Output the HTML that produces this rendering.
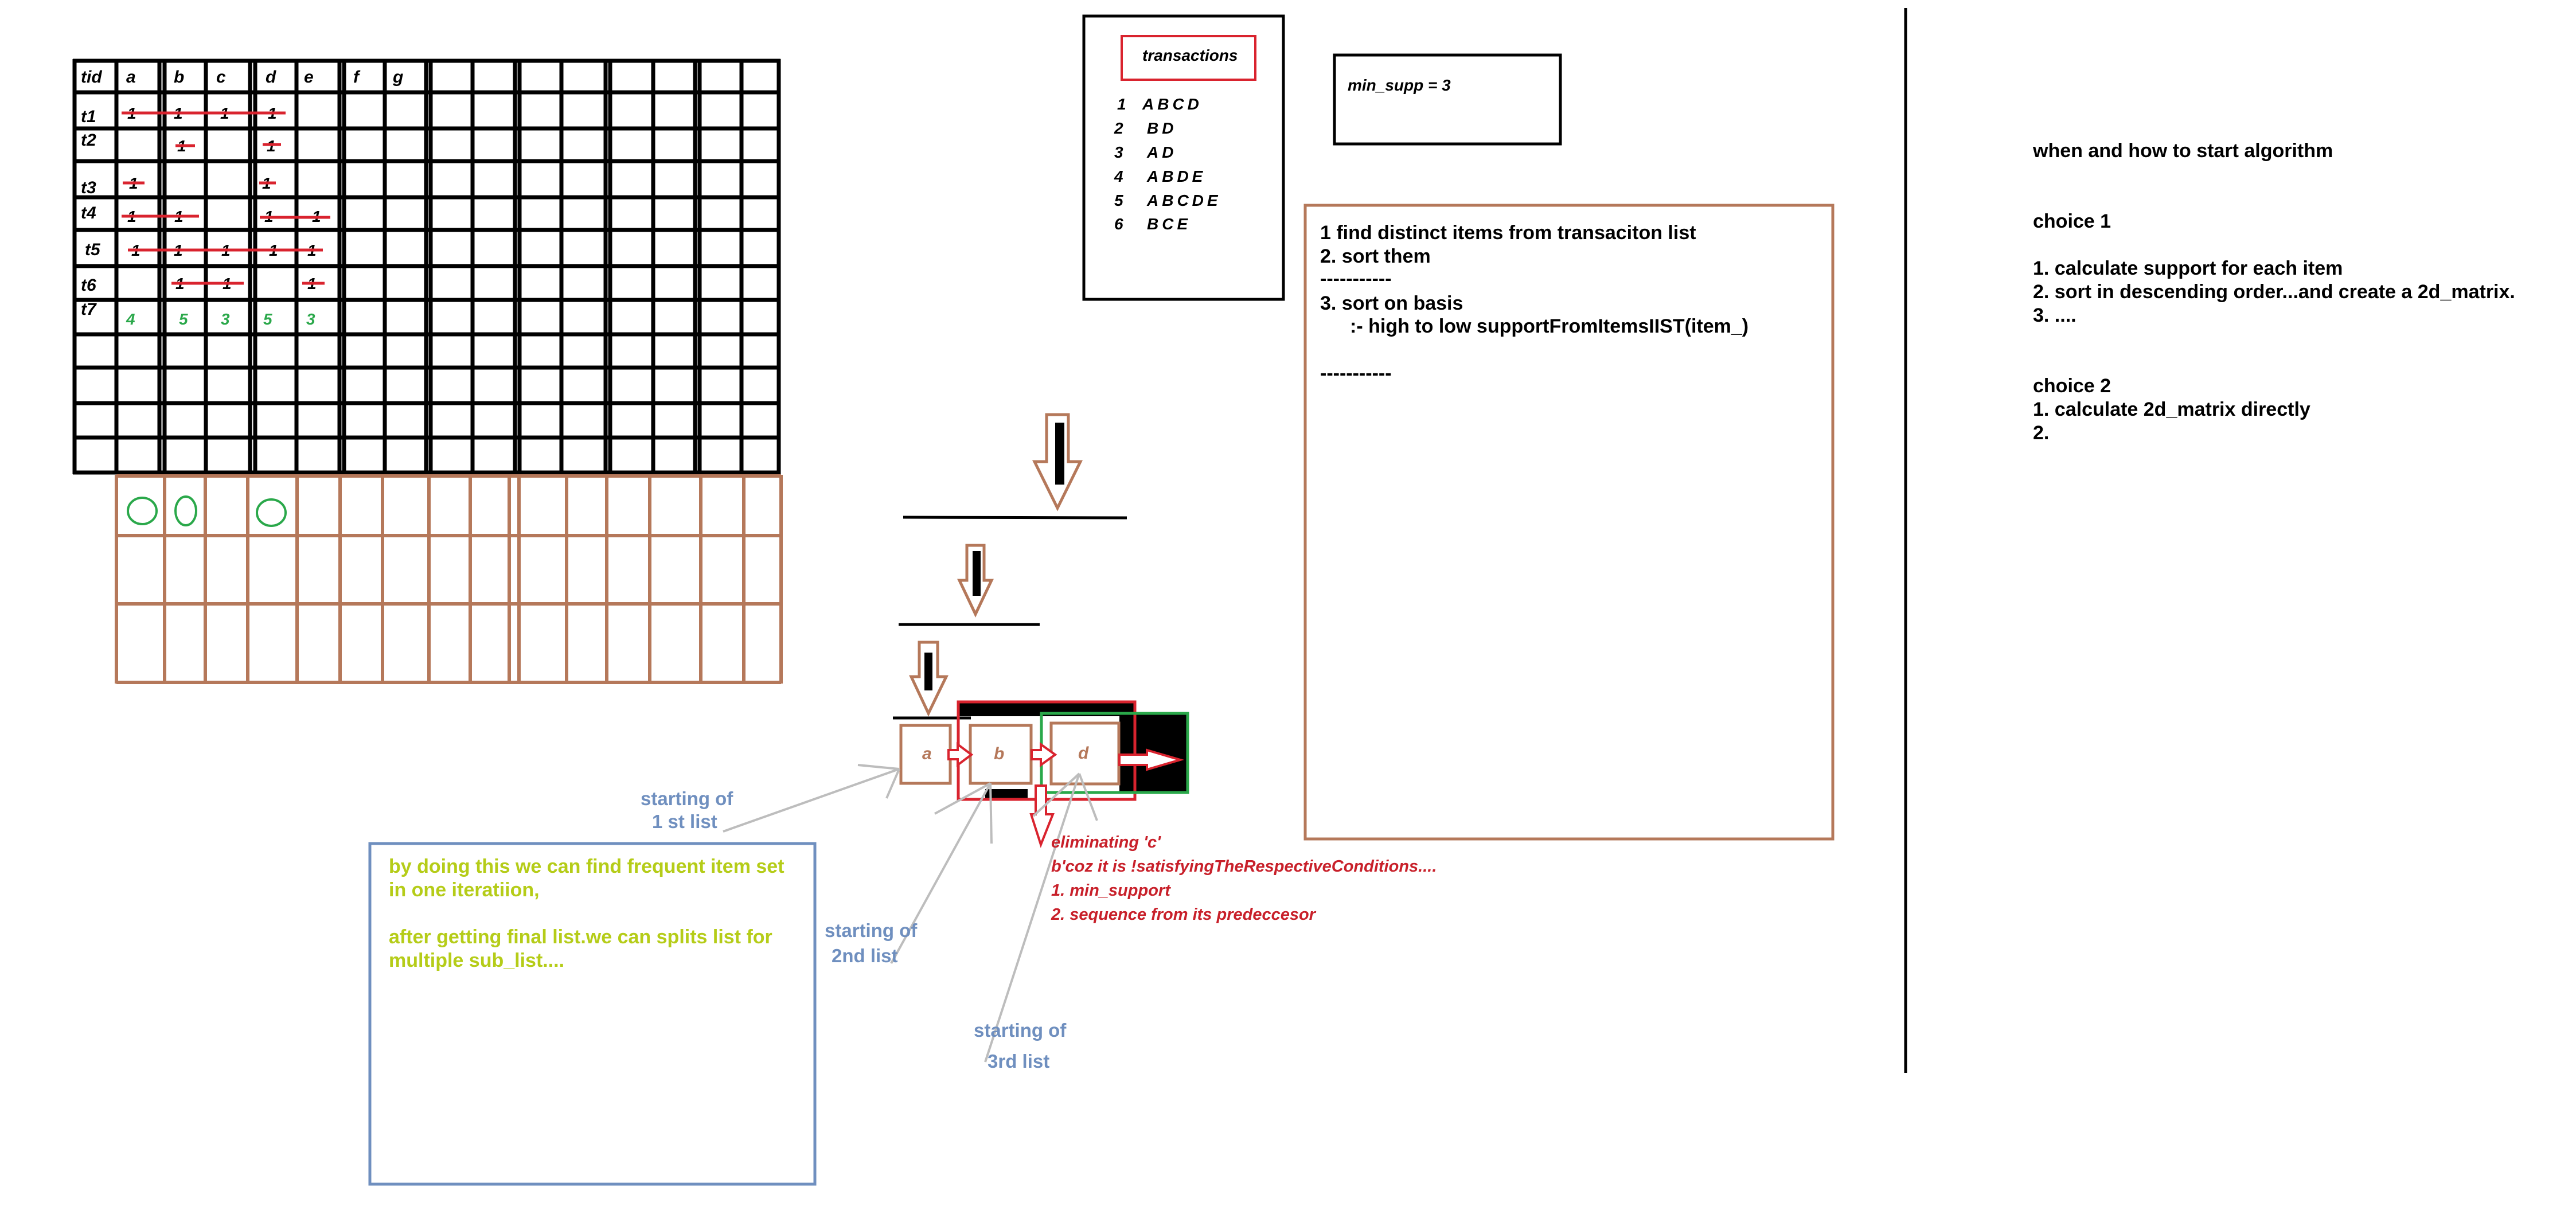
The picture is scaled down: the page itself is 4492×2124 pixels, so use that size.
<!DOCTYPE html>
<html><head><meta charset="utf-8"><style>
html,body{margin:0;padding:0;background:#fff;}
svg{display:block;}
text{font-family:"Liberation Sans",sans-serif;font-weight:bold;}
</style></head><body>
<svg width="4492" height="2124" viewBox="0 0 4492 2124" xmlns="http://www.w3.org/2000/svg">
<rect width="4492" height="2124" fill="#fff"/>
<g stroke="#000" stroke-width="7">
<line x1="130" y1="103" x2="130" y2="827"/>
<line x1="203" y1="103" x2="203" y2="827"/>
<line x1="278" y1="103" x2="278" y2="827"/><line x1="287" y1="103" x2="287" y2="827"/>
<line x1="359" y1="103" x2="359" y2="827"/>
<line x1="436" y1="103" x2="436" y2="827"/><line x1="445" y1="103" x2="445" y2="827"/>
<line x1="517" y1="103" x2="517" y2="827"/>
<line x1="592" y1="103" x2="592" y2="827"/><line x1="600" y1="103" x2="600" y2="827"/>
<line x1="671" y1="103" x2="671" y2="827"/>
<line x1="743" y1="103" x2="743" y2="827"/><line x1="751" y1="103" x2="751" y2="827"/>
<line x1="824" y1="103" x2="824" y2="827"/>
<line x1="898" y1="103" x2="898" y2="827"/><line x1="906" y1="103" x2="906" y2="827"/>
<line x1="979" y1="103" x2="979" y2="827"/>
<line x1="1056" y1="103" x2="1056" y2="827"/><line x1="1064" y1="103" x2="1064" y2="827"/>
<line x1="1139" y1="103" x2="1139" y2="827"/>
<line x1="1212" y1="103" x2="1212" y2="827"/><line x1="1220" y1="103" x2="1220" y2="827"/>
<line x1="1293" y1="103" x2="1293" y2="827"/>
<line x1="1358" y1="103" x2="1358" y2="827"/>
<line x1="127" y1="106" x2="1361" y2="106"/>
<line x1="127" y1="161" x2="1361" y2="161"/>
<line x1="127" y1="224" x2="1361" y2="224"/>
<line x1="127" y1="281" x2="1361" y2="281"/>
<line x1="127" y1="344" x2="1361" y2="344"/>
<line x1="127" y1="401" x2="1361" y2="401"/>
<line x1="127" y1="464" x2="1361" y2="464"/>
<line x1="127" y1="523" x2="1361" y2="523"/>
<line x1="127" y1="583" x2="1361" y2="583"/>
<line x1="127" y1="641" x2="1361" y2="641"/>
<line x1="127" y1="703" x2="1361" y2="703"/>
<line x1="127" y1="763" x2="1361" y2="763"/>
<line x1="127" y1="824" x2="1361" y2="824"/>
</g>
<g stroke="#b5785a" stroke-width="6">
<line x1="203" y1="828" x2="203" y2="1192"/>
<line x1="287" y1="828" x2="287" y2="1192"/>
<line x1="358" y1="828" x2="358" y2="1192"/>
<line x1="432" y1="828" x2="432" y2="1192"/>
<line x1="518" y1="828" x2="518" y2="1192"/>
<line x1="593" y1="828" x2="593" y2="1192"/>
<line x1="667" y1="828" x2="667" y2="1192"/>
<line x1="748" y1="828" x2="748" y2="1192"/>
<line x1="820" y1="828" x2="820" y2="1192"/>
<line x1="888" y1="828" x2="888" y2="1192"/>
<line x1="905" y1="828" x2="905" y2="1192"/>
<line x1="988" y1="828" x2="988" y2="1192"/>
<line x1="1058" y1="828" x2="1058" y2="1192"/>
<line x1="1133" y1="828" x2="1133" y2="1192"/>
<line x1="1222" y1="828" x2="1222" y2="1192"/>
<line x1="1297" y1="828" x2="1297" y2="1192"/>
<line x1="1362" y1="828" x2="1362" y2="1192"/>
<line x1="203" y1="830" x2="1362" y2="830"/>
<line x1="203" y1="934" x2="1362" y2="934"/>
<line x1="203" y1="1053" x2="1362" y2="1053"/>
<line x1="203" y1="1190" x2="1362" y2="1190"/>
</g>
<g fill="none" stroke="#2aa84a" stroke-width="4">
<ellipse cx="248" cy="891" rx="25" ry="23"/>
<ellipse cx="324" cy="891" rx="18" ry="25"/>
<ellipse cx="473" cy="894" rx="25" ry="23"/>
</g>
<g font-size="30" fill="#000" font-style="italic">
<text x="141" y="144">tid</text><text x="220" y="144">a</text><text x="303" y="144">b</text><text x="377" y="144">c</text><text x="463" y="144">d</text><text x="530" y="144">e</text><text x="616" y="144">f</text><text x="685" y="144">g</text>
<text x="141" y="213">t1</text><text x="141" y="254">t2</text><text x="141" y="337">t3</text><text x="141" y="381">t4</text><text x="148" y="445">t5</text><text x="141" y="507">t6</text><text x="141" y="549">t7</text>
<g font-size="28">
<text x="222" y="207">1</text><text x="303" y="207">1</text><text x="384" y="207">1</text><text x="467" y="207">1</text>
<text x="309" y="264">1</text><text x="465" y="264">1</text>
<text x="225" y="329">1</text><text x="457" y="329">1</text>
<text x="222" y="387">1</text><text x="304" y="387">1</text><text x="461" y="387">1</text><text x="544" y="387">1</text>
<text x="229" y="446">1</text><text x="303" y="446">1</text><text x="386" y="446">1</text><text x="469" y="446">1</text><text x="536" y="446">1</text>
<text x="306" y="504">1</text><text x="388" y="504">1</text><text x="536" y="504">1</text>
</g>
<g font-size="28" fill="#2aa84a">
<text x="220" y="566">4</text><text x="312" y="566">5</text><text x="385" y="566">3</text><text x="459" y="566">5</text><text x="534" y="566">3</text>
</g>
</g>
<g stroke="#d9232e" stroke-width="5">
<line x1="212" y1="197" x2="498" y2="197"/>
<line x1="306" y1="254" x2="340" y2="254"/><line x1="458" y1="252" x2="490" y2="252"/>
<line x1="214" y1="319" x2="252" y2="319"/><line x1="452" y1="319" x2="481" y2="319"/>
<line x1="212" y1="377" x2="347" y2="377"/><line x1="453" y1="379" x2="576" y2="379"/>
<line x1="223" y1="436" x2="563" y2="436"/>
<line x1="299" y1="494" x2="425" y2="494"/><line x1="527" y1="494" x2="566" y2="494"/>
</g>
<rect x="1890" y="28" width="348" height="494" fill="none" stroke="#000" stroke-width="5"/>
<rect x="1956" y="63" width="233" height="76" fill="none" stroke="#d9232e" stroke-width="4"/>
<text x="1992" y="106" font-size="28" font-style="italic">transactions</text>
<g font-size="28" font-style="italic">
<text x="1948" y="191">1</text><text x="1992" y="191" letter-spacing="6">ABCD</text>
<text x="1943" y="233">2</text><text x="2000" y="233" letter-spacing="6">BD</text>
<text x="1943" y="275">3</text><text x="2000" y="275" letter-spacing="6">AD</text>
<text x="1943" y="317">4</text><text x="2000" y="317" letter-spacing="6">ABDE</text>
<text x="1943" y="359">5</text><text x="2000" y="359" letter-spacing="6">ABCDE</text>
<text x="1943" y="400">6</text><text x="2000" y="400" letter-spacing="6">BCE</text>
</g>
<rect x="2327" y="96" width="394" height="155" fill="none" stroke="#000" stroke-width="5"/>
<text x="2350" y="158" font-size="28" font-style="italic">min_supp = 3</text>
<rect x="2276" y="358" width="920" height="1105" fill="none" stroke="#b5785a" stroke-width="5"/>
<g font-size="34">
<text x="2302" y="417">1 find distinct items from transaciton list</text>
<text x="2302" y="458">2. sort them</text>
<text x="2302" y="497">-----------</text>
<text x="2302" y="540">3. sort on basis</text>
<text x="2354" y="580">:- high to low supportFromItemsIIST(item_)</text>
<text x="2302" y="662">-----------</text>
</g>
<line x1="3323" y1="14" x2="3323" y2="1871" stroke="#000" stroke-width="5"/>
<g font-size="34">
<text x="3545" y="274">when and how to start algorithm</text>
<text x="3545" y="397">choice 1</text>
<text x="3545" y="479">1. calculate support for each item</text>
<text x="3545" y="520">2. sort in descending order...and create a 2d_matrix.</text>
<text x="3545" y="561">3. ....</text>
<text x="3545" y="684">choice 2</text>
<text x="3545" y="725">1. calculate 2d_matrix directly</text>
<text x="3545" y="766">2.</text>
</g>
<g fill="#fff" stroke="#b5785a" stroke-width="5">
<path d="M1825 723 H1863 V805 H1884 L1844 886 L1804 805 H1825 Z"/>
<path d="M1686 951 H1716 V1012 H1729 L1701 1071 L1673 1012 H1686 Z"/>
<path d="M1603 1120 H1635 V1180 H1650 L1619 1244 L1589 1180 H1603 Z"/>
</g>
<rect x="1840" y="737" width="16" height="108" fill="#000"/>
<rect x="1696" y="961" width="14" height="78" fill="#000"/>
<rect x="1612" y="1138" width="14" height="66" fill="#000"/>
<g stroke="#000" stroke-width="5">
<line x1="1575" y1="902" x2="1965" y2="903"/>
<line x1="1567" y1="1089" x2="1813" y2="1089"/>
<line x1="1557" y1="1252" x2="1693" y2="1252"/>
</g>
<rect x="1672" y="1225" width="306" height="24" fill="#000"/>
<rect x="1952" y="1246" width="118" height="135" fill="#000"/>
<rect x="1718" y="1376" width="74" height="16" fill="#000"/>
<rect x="1671" y="1224" width="308" height="170" fill="none" stroke="#d9232e" stroke-width="5"/>
<rect x="1816" y="1244" width="255" height="138" fill="none" stroke="#2aa84a" stroke-width="5"/>
<g fill="#fff" stroke="#b5785a" stroke-width="5">
<rect x="1571" y="1265" width="86" height="101"/>
<rect x="1692" y="1265" width="106" height="101"/>
<rect x="1833" y="1261" width="118" height="106"/>
</g>
<g font-size="30" fill="#b5785a" font-style="italic">
<text x="1608" y="1324">a</text><text x="1733" y="1324">b</text><text x="1880" y="1323">d</text>
</g>
<g fill="#fff" stroke="#d9232e" stroke-width="4">
<path d="M1654 1308 H1670 V1298 L1694 1316 L1670 1334 V1324 H1654 Z"/>
<path d="M1799 1308 H1815 V1298 L1840 1316 L1815 1334 V1324 H1799 Z"/>
<path d="M1952 1316 H2000 V1308 L2058 1325 L2000 1342 V1334 H1952 Z"/>
<path d="M1806 1370 H1824 V1420 H1836 L1815 1473 L1798 1420 H1806 Z"/>
</g>
<g stroke="#bdbdbd" stroke-width="4" fill="none">
<line x1="1261" y1="1450" x2="1568" y2="1341"/>
<line x1="1496" y1="1334" x2="1568" y2="1341"/>
<line x1="1546" y1="1392" x2="1568" y2="1341"/>
<line x1="1554" y1="1680" x2="1727" y2="1366"/>
<line x1="1630" y1="1419" x2="1727" y2="1366"/>
<line x1="1729" y1="1471" x2="1727" y2="1366"/>
<line x1="1718" y1="1852" x2="1882" y2="1349"/>
<line x1="1802" y1="1423" x2="1882" y2="1349"/>
<line x1="1913" y1="1431" x2="1882" y2="1349"/>
</g>
<g font-size="29" fill="#c8202a" font-style="italic">
<text x="1833" y="1478">eliminating 'c'</text>
<text x="1833" y="1520">b'coz it is !satisfyingTheRespectiveConditions....</text>
<text x="1833" y="1562">1. min_support</text>
<text x="1833" y="1604">2. sequence from its predeccesor</text>
</g>
<g font-size="33" fill="#6f8fbf">
<text x="1117" y="1404">starting of</text>
<text x="1137" y="1444">1 st list</text>
<text x="1438" y="1634">starting of</text>
<text x="1450" y="1678">2nd list</text>
<text x="1698" y="1808">starting of</text>
<text x="1722" y="1862">3rd list</text>
</g>
<rect x="645" y="1471" width="776" height="594" fill="none" stroke="#6f8fbf" stroke-width="5"/>
<g font-size="34" fill="#b5cc18">
<text x="678" y="1522">by doing this we can find frequent item set</text>
<text x="678" y="1563">in one iteratiion,</text>
<text x="678" y="1645">after getting final list.we can splits list for</text>
<text x="678" y="1686">multiple sub_list....</text>
</g>
</svg>
</body></html>
